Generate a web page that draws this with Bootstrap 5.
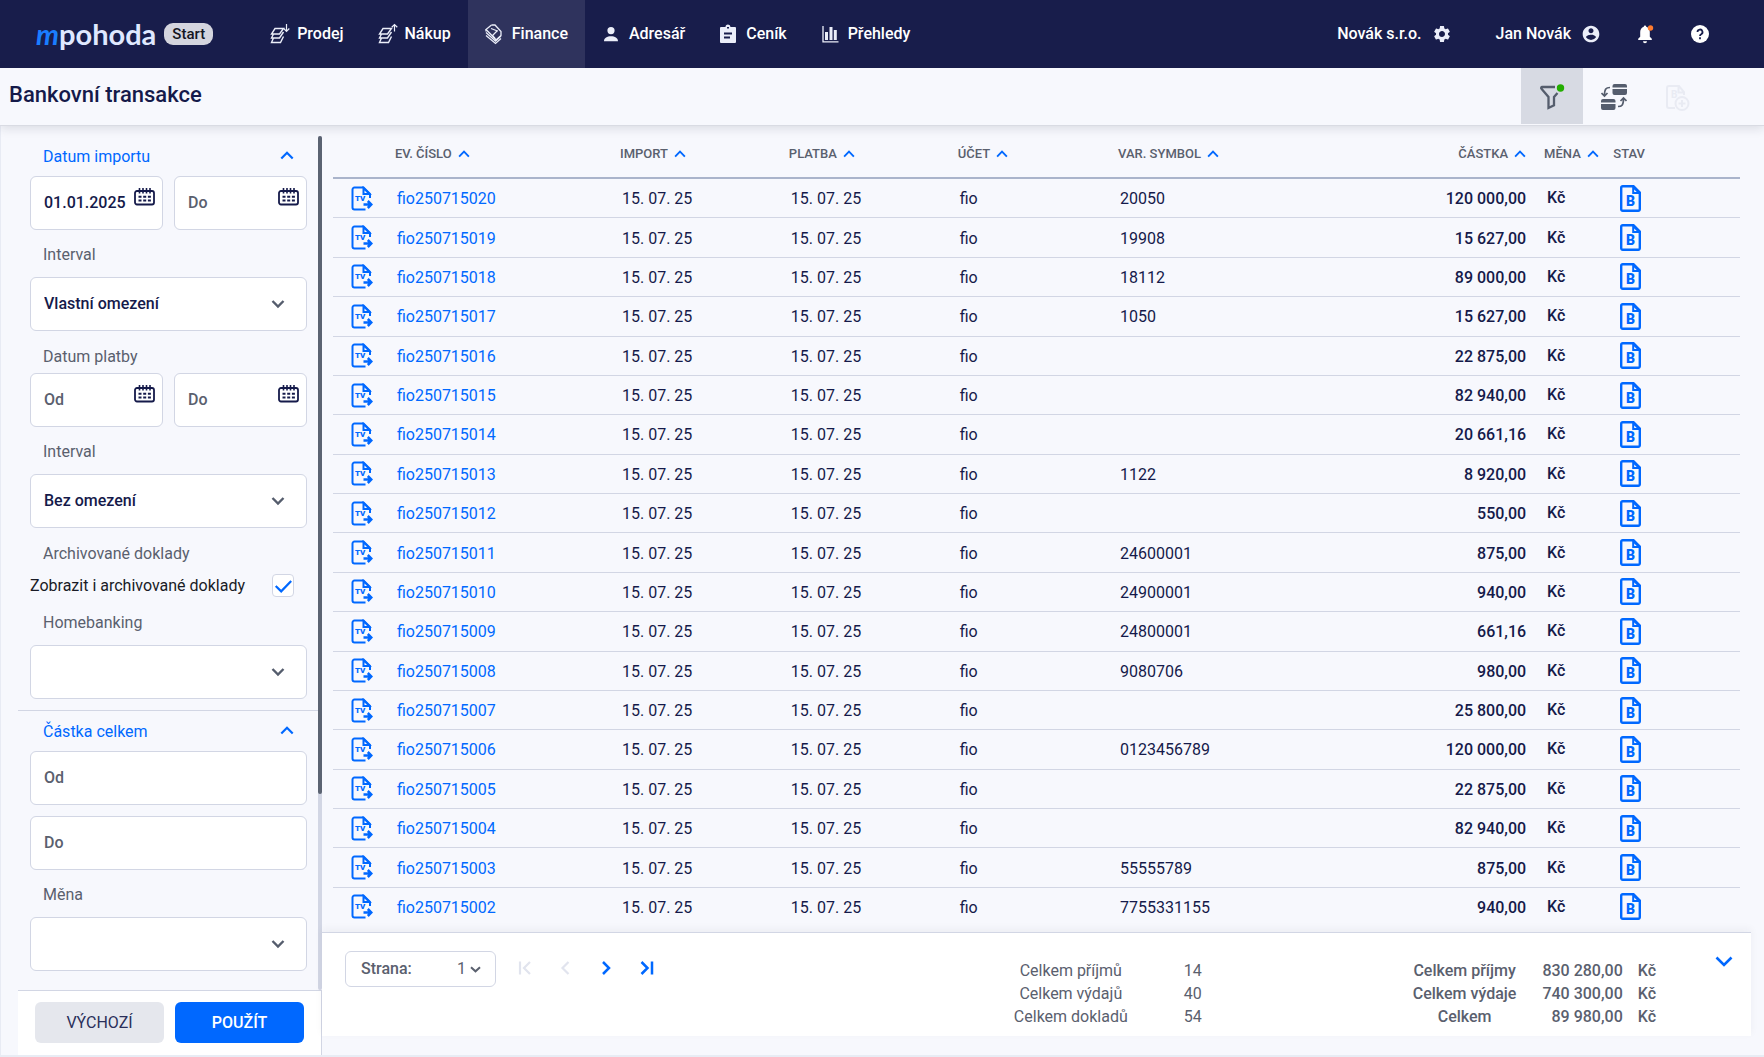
<!DOCTYPE html>
<html lang="cs">
<head>
<meta charset="utf-8">
<meta name="viewport" content="width=device-width, initial-scale=1">
<title>Bankovní transakce</title>
<link href="https://cdn.jsdelivr.net/npm/bootstrap@5.3.0/dist/css/bootstrap.min.css" rel="stylesheet">
<style>
:root{--navy:#181d4b;--blue:#0068ff;--ink:#151a4a;--grey:#5a606e;--line:#d2d6e4;--page:#f7f8fd}
body{font-family:Roboto,"Liberation Sans",sans-serif;font-size:16px;line-height:24px;color:var(--ink);background:var(--page);border-bottom:2px solid #e8ecf4}
main{border-left:1px solid #e8ebf4;padding-top:10px}
svg{display:block;flex:none}
a{text-decoration:none}
.topbar{background:var(--navy);height:68px;padding-left:36px;padding-right:55px}
.brand-name{font:700 29px/36px Lato,sans-serif;color:#dfe8ff}
.brand-name em{color:#1a7dff}
.brand-tag{background:#d4d5de;color:#15161f;border-radius:9px;height:22px;line-height:22px;font-size:15px;font-weight:500;padding:0 8px;margin-left:8px}
.main-nav{margin-left:40px}
.main-nav .nav-link{height:68px;padding:0 17px;gap:8px;color:#fff;font-weight:500}
.main-nav .nav-link svg{width:19px;height:20px;overflow:visible;color:#ebeef9}
.main-nav .nav-link.active{background:#2f335d}
.user-nav a{color:#fff;font-weight:500;gap:10px}
.user-nav .firm{margin-right:44px}
.user-nav .bell{margin:0 36px 0 34px}
.page-head{height:58px;border-bottom:1px solid #d9dbe3;box-shadow:0 2px 10px rgba(30,35,60,.14);z-index:2;padding-left:9px;padding-right:57px}
.page-head h1{font-size:22px;line-height:28px;font-weight:500;margin:0 0 3px}
.tool{width:62px;height:56px;border:0;border-radius:0;background:none;color:#555d6d;padding:0}
.tool.active{background:#d7dae3}
.side{width:304px;margin-left:17px}
.side-scroll{padding:0 11px 0 12px;overflow:hidden}
.track{width:4px;background:var(--line);border-radius:2px}
.thumb{width:4px;height:77%;background:#5b6372;border-radius:2px}
.sect{height:40px;padding:1px 13px 0;background:none;border:0;color:var(--blue);width:100%}
.sect svg{margin-bottom:3px}
.sect-line{border-top:1px solid var(--line);margin:11px -11px 0 -12px}
.cap{display:block;padding:13px 13px 0;color:var(--grey)}
.cap-select{margin-bottom:10px}
.cap-date{padding-top:14px;margin-bottom:4px}
.cap-check{padding-top:14px;margin-bottom:6px}
.field{height:54px;border:1px solid var(--line);border-radius:6px;background-color:#fff;color:var(--ink);font-weight:500;padding:0 13px 2px;font-size:16px}
.field::placeholder{color:var(--grey);opacity:1}
.field + .field{margin-top:11px}
.form-select.field{padding-bottom:0;background-image:url("data:image/svg+xml,%3Csvg xmlns='http://www.w3.org/2000/svg' viewBox='0 0 14 10'%3E%3Cpath d='M1.5 2l5.500 5.500L12.500 2' fill='none' stroke='%23555d6d' stroke-width='2.400'/%3E%3C/svg%3E");background-size:14px 10px;background-position:right 21px center}
.cal{right:8px;top:12px;padding:0;border:0;background:none;color:var(--ink)}
.date-row{gap:11px}
.check-row{height:26px;padding-right:13px;color:#191b26}
.check-row label{padding-top:2px}
.tick{width:22px;height:23px;margin:0;border:1px solid var(--line);border-radius:4px!important}
.form-check-input.tick:checked{background-color:#fff;border-color:var(--line);background-image:url("data:image/svg+xml,%3Csvg xmlns='http://www.w3.org/2000/svg' viewBox='0 0 22 22'%3E%3Cpath d='M3 12l6 6L20 6.500' fill='none' stroke='%230068ff' stroke-width='2.400'/%3E%3C/svg%3E")}
.side-end{border-top:1px solid var(--line);border-right:1px solid var(--line);background:#fff;height:65px;padding:11px 17px;gap:11px}
.side-end .btn{flex:1 1 0;height:41px;border-radius:6px;border:0;padding:0;font-size:16px}
.btn-plain{background:#e5e7ed;color:#2a2f5a}
.btn-main{background:var(--blue);color:#fff;font-weight:500}
.grid-wrap{padding:0 24px 6px 11px}
.docs{table-layout:fixed;border-collapse:separate;border-spacing:0}
.docs th{height:43px;font-size:13px;line-height:20px;font-weight:500;color:var(--grey);border-bottom:2px solid #aab4cb;padding:0 0 5px;white-space:nowrap}
.docs th svg{display:inline-block;margin-left:6px;vertical-align:0}
.docs td{padding:2px 0 0 2px;line-height:24px;border-bottom:1px solid var(--line)}
.docs tbody tr:last-child td{border-bottom:0}
.docs td a{color:var(--blue)}
.docs .sum{text-align:right;font-weight:500}
.docs th.cur{padding-left:18px}
.docs td.cur{padding:0 0 0 21px;font-weight:500}
.docs td.doc{padding:0 0 0 18px}
.docs td.state{padding:0 0 0 7px}
.w-icon{width:4.4%}.w-no{width:16%}.w-date{width:12%}.w-acc{width:11.4%}.w-var{width:16%}.w-sum{width:13%}.w-cur{width:6.2%}
.line-icon{fill:none;stroke:var(--blue);stroke-width:2}
.line-icon .fold-corner{fill:var(--page)}
.line-icon text{fill:var(--blue);stroke:none;font-weight:900}
.foot{height:104px;margin-right:13px;margin-bottom:19px;border-top:1px solid var(--line);background:#fff;box-shadow:0 -3px 8px rgba(30,35,60,.05);padding:18px 18px 0 23px;color:var(--grey)}
.pager-box{width:151px;height:36px;border:1px solid var(--line);border-radius:6px;padding:0 14px 0 15px;font-weight:500}
.pager-box select{appearance:none;border:0;background:none;color:var(--grey);width:14px;padding:0;text-align:right}
.pages{margin-left:21px;gap:27px;height:34px}
.pages button{border:0;background:none;padding:0;color:var(--blue);width:14px}
.pages button:disabled{color:#e1e4ee}
.totals{margin-top:8px}
.totals td{padding:0;line-height:23px;text-align:center}
.totals .num{text-align:right}
.counts{margin-right:211px}
.counts .num{padding-left:56px}
.money{margin-right:59px;font-weight:500}
.money .num{padding-left:26px;padding-right:15px}
.fold{border:0;background:none;padding:5px 0 0;color:var(--blue)}
</style>
<script src="https://cdn.jsdelivr.net/npm/bootstrap@5.3.0/dist/js/bootstrap.bundle.min.js"></script>
</head>
<body class="vh-100 d-flex flex-column overflow-hidden">
<svg width="0" height="0" class="position-absolute" aria-hidden="true">
  <symbol id="up" viewBox="0 0 14 9"><path d="M1.300 7.500L7 1.800l5.700 5.700" fill="none" stroke="#0068ff" stroke-width="2.200"/></symbol>
  <symbol id="cal" viewBox="0 0 21 18"><rect x="1" y="3" width="19" height="13.500" rx="2" fill="none" stroke="currentColor" stroke-width="1.800"/><path d="M5.500 0v5.500M9 0v5.500M12.500 0v5.500M16 0v5.500" stroke="currentColor" stroke-width="1.600"/><path d="M4.500 8.700h12.500M4.500 12.500h12.500" stroke="currentColor" stroke-width="2" stroke-dasharray="3 1.700"/></symbol>
  <symbol id="stack" viewBox="0 0 19 20"><path d="M5 4.500h8.500l-4 5.500H1.500zM3.500 10L1.500 14h8l4-6M3.500 14L1.500 18.500h9l3-6" fill="none" stroke="currentColor" stroke-width="1.400"/></symbol>
</svg>

<header class="topbar d-flex align-items-center flex-shrink-0">
  <a href="#" class="d-flex align-items-center"><span class="brand-name"><em>m</em>pohoda</span><span class="brand-tag">Start</span></a>
  <nav class="main-nav nav flex-nowrap">
    <a class="nav-link d-flex align-items-center" href="#"><svg viewBox="0 0 19 20"><use href="#stack" width="19" height="20"/><path d="M16.500 0v7M13.700 4.500l2.800 2.800 2.800-2.800" fill="none" stroke="currentColor" stroke-width="1.200"/></svg>Prodej</a>
    <a class="nav-link d-flex align-items-center" href="#"><svg viewBox="0 0 19 20"><use href="#stack" width="19" height="20"/><path d="M16.500 7.500v-7M13.700 3.200L16.500.5l2.800 2.700" fill="none" stroke="currentColor" stroke-width="1.200"/></svg>Nákup</a>
    <a class="nav-link active d-flex align-items-center" href="#"><svg viewBox="0 0 19 20"><g fill="none" stroke="currentColor" stroke-width="1.300"><path d="M6.500 1l3.500 0 6 6.500v4l-5 4.500-3.500-4.500 5-5"/><path d="M6.500 1L1 5.500l9 9"/><path d="M1 8.500l9.500 8.500 5.500-5M1 11.500l9.500 8 5.500-5M1 5.500v2M6 4.500l6.500 2.500"/></g></svg>Finance</a>
    <a class="nav-link d-flex align-items-center" href="#"><svg viewBox="0 0 19 20"><path d="M9 3a3.600 3.600 0 1 1 0 7.200A3.600 3.600 0 0 1 9 3zM2 17.300c0-3.200 3.200-5 7-5s7 1.800 7 5z" fill="currentColor"/></svg>Adresář</a>
    <a class="nav-link d-flex align-items-center" href="#"><svg viewBox="0 0 19 20"><path fill="currentColor" fill-rule="evenodd" d="M2 3h4.500a2.500 2.500 0 0 1 5 0H16a1 1 0 0 1 1 1v14a1 1 0 0 1-1 1H2a1 1 0 0 1-1-1V4a1 1 0 0 1 1-1zm6 0v1.500h2V3zM5 8.500v2h8v-2zm0 4v2h6v-2z"/></svg>Ceník</a>
    <a class="nav-link d-flex align-items-center" href="#"><svg viewBox="0 0 19 20"><path d="M2 2v15.800h15.500" fill="none" stroke="currentColor" stroke-width="1.300"/><path d="M4 8h3v8H4zM8.500 3h3v13h-3zM12.800 6h3v10h-3z" fill="currentColor"/></svg>Přehledy</a>
  </nav>
  <div class="user-nav d-flex align-items-center ms-auto">
    <a href="#" class="firm d-flex align-items-center"><span>Novák s.r.o.</span><svg width="20" height="20" viewBox="0 0 24 24" fill="#ebeef9"><path d="M19.140 12.940c.040-.300.060-.610.060-.940s-.020-.640-.070-.940l2.030-1.580a.490.490 0 0 0 .120-.610l-1.920-3.320a.488.488 0 0 0-.590-.220l-2.390.960c-.500-.380-1.030-.700-1.620-.940l-.360-2.540a.484.484 0 0 0-.480-.410h-3.840c-.240 0-.430.170-.470.410l-.360 2.540c-.590.240-1.130.570-1.620.940l-2.390-.960c-.220-.080-.470 0-.590.220L2.740 8.870c-.120.210-.080.470.120.610l2.030 1.580c-.050.300-.090.630-.090.940s.020.640.070.940l-2.030 1.580a.490.490 0 0 0-.120.610l1.920 3.320c.120.220.370.290.590.220l2.390-.960c.500.380 1.030.700 1.620.940l.360 2.540c.050.240.240.410.480.410h3.840c.240 0 .440-.170.470-.410l.360-2.540c.590-.240 1.130-.560 1.620-.940l2.390.960c.220.080.470 0 .590-.220l1.920-3.320c.120-.220.070-.470-.120-.610zM12 15.600A3.610 3.610 0 0 1 8.400 12c0-1.980 1.620-3.600 3.600-3.600s3.600 1.620 3.600 3.600-1.620 3.600-3.600 3.600z"/></svg></a>
    <a href="#" class="d-flex align-items-center"><span>Jan Novák</span><svg width="20" height="20" viewBox="0 0 24 24" fill="#ebeef9"><path d="M12 2C6.480 2 2 6.480 2 12s4.480 10 10 10 10-4.480 10-10S17.520 2 12 2zm0 3c1.660 0 3 1.340 3 3s-1.340 3-3 3-3-1.340-3-3 1.340-3 3-3zm0 14.200a7.200 7.200 0 0 1-6-3.220c.030-1.990 4-3.080 6-3.080 1.990 0 5.970 1.090 6 3.080a7.200 7.200 0 0 1-6 3.220z"/></svg></a>
    <a href="#" class="bell" aria-label="Oznámení"><svg width="20" height="20" viewBox="0 0 20 20" overflow="visible"><path fill="#fff" d="M8 17.300h4a2 2 0 0 1-4 0zM10 1.500c.8 0 1.200.6 1.200 1.300 2.400.6 3.600 2.700 3.600 5.200v4.800l2 2v1.200H3.200v-1.200l2-2V8c0-2.500 1.300-4.600 3.600-5.200 0-.7.400-1.300 1.200-1.300z"/><circle cx="15.500" cy="4" r="2.700" fill="#ff7b2e"/></svg></a>
    <a href="#" aria-label="Nápověda"><svg width="18" height="18" viewBox="0 0 18 18"><circle cx="9" cy="9" r="9" fill="#fff"/><path d="M6.500 7a2.500 2.500 0 1 1 3.700 2.200C9.300 9.700 9 10 9 11M9 12.300v1.900" fill="none" stroke="#181d4b" stroke-width="1.800"/></svg></a>
  </div>
</header>

<div class="page-head d-flex align-items-center position-relative flex-shrink-0">
  <h1>Bankovní transakce</h1>
  <div class="d-flex ms-auto align-self-start">
    <button class="tool active d-flex align-items-center justify-content-center" aria-label="Filtr"><svg width="26" height="28" viewBox="0 0 26 28"><path d="M16 5H3.200c-1 0-1.400 1-.7 1.700L9.500 15v11l5.500-2.700V15l3.500-4" fill="none" stroke="currentColor" stroke-width="2.300"/><circle cx="21.500" cy="6" r="3.700" fill="#23ad00"/></svg></button>
    <button class="tool d-flex align-items-center justify-content-center" aria-label="Převod"><svg width="26" height="28" viewBox="0 -2 26 28"><path d="M11.500 3.500V2a2 2 0 0 1 2-2h10.500a2 2 0 0 1 2 2v1.500zM11.500 5h14.500v4a2 2 0 0 1-2 2h-10.500a2 2 0 0 1-2-2zM0 18.500V17a2 2 0 0 1 2-2h10.500a2 2 0 0 1 2 2v1.500zM0 20h14.500v4a2 2 0 0 1-2 2H2a2 2 0 0 1-2-2z" fill="currentColor"/><path d="M9 3.500C5 3.500 3.500 5 3.500 11.500M.5 9l3 3 3-3M17 22.500c4 0 5.500-1.500 5.500-8M19.500 17l3-3 3 3" fill="none" stroke="currentColor" stroke-width="1.700"/></svg></button>
    <button class="tool d-flex align-items-center justify-content-center" disabled aria-label="Nový doklad"><svg width="24" height="28" viewBox="-2 -3 24 28" overflow="visible" fill="none" stroke="#e9ebf3" stroke-width="2"><path d="M9 23H3a2 2 0 0 1-2-2V3a2 2 0 0 1 2-2h10l5 6v3M12.500 1v6.500H18"/><text x="5" y="13" font-family="Roboto" font-weight="700" font-size="10" fill="#e9ebf3" stroke="none">B</text><circle cx="16" cy="18.500" r="6.500"/><path d="M16 15v7M12.500 18.500h7"/></svg></button>
  </div>
</div>

<main class="d-flex flex-grow-1 overflow-hidden">
  <form class="side d-flex flex-column flex-shrink-0">
    <div class="d-flex flex-grow-1 overflow-hidden">
      <div class="side-scroll flex-grow-1">
        <button type="button" class="sect d-flex align-items-center justify-content-between">Datum importu<svg width="14" height="9"><use href="#up"/></svg></button>
        <div class="date-row d-flex">
          <div class="position-relative"><input class="form-control field" aria-label="Datum importu od" placeholder="Od" value="01.01.2025"><button type="button" class="cal position-absolute" aria-label="Kalendář"><svg width="21" height="18"><use href="#cal"/></svg></button></div>
          <div class="position-relative"><input class="form-control field" aria-label="Datum importu do" placeholder="Do"><button type="button" class="cal position-absolute" aria-label="Kalendář"><svg width="21" height="18"><use href="#cal"/></svg></button></div>
        </div>
        <label class="cap cap-select" for="int1">Interval</label>
        <select class="form-select field" id="int1"><option>Vlastní omezení</option></select>
        <span class="cap cap-date">Datum platby</span>
        <div class="date-row d-flex">
          <div class="position-relative"><input class="form-control field" aria-label="Datum platby od" placeholder="Od"><button type="button" class="cal position-absolute" aria-label="Kalendář"><svg width="21" height="18"><use href="#cal"/></svg></button></div>
          <div class="position-relative"><input class="form-control field" aria-label="Datum platby do" placeholder="Do"><button type="button" class="cal position-absolute" aria-label="Kalendář"><svg width="21" height="18"><use href="#cal"/></svg></button></div>
        </div>
        <label class="cap cap-select" for="int2">Interval</label>
        <select class="form-select field" id="int2"><option>Bez omezení</option></select>
        <span class="cap cap-check">Archivované doklady</span>
        <div class="check-row d-flex align-items-center justify-content-between">
          <label for="arch">Zobrazit i archivované doklady</label>
          <input class="form-check-input tick" type="checkbox" id="arch" checked>
        </div>
        <label class="cap cap-select" for="hb">Homebanking</label>
        <select class="form-select field" id="hb"><option></option></select>
        <div class="sect-line"></div>
        <button type="button" class="sect d-flex align-items-center justify-content-between">Částka celkem<svg width="14" height="9"><use href="#up"/></svg></button>
        <input class="form-control field" aria-label="Částka od" placeholder="Od">
        <input class="form-control field" aria-label="Částka do" placeholder="Do">
        <label class="cap cap-select" for="cur">Měna</label>
        <select class="form-select field" id="cur"><option></option></select>
      </div>
      <div class="track"><div class="thumb"></div></div>
    </div>
    <div class="side-end d-flex">
      <button type="reset" class="btn btn-plain">VÝCHOZÍ</button>
      <button type="submit" class="btn btn-main">POUŽÍT</button>
    </div>
  </form>

  <section class="flex-grow-1 d-flex flex-column">
    <div class="grid-wrap flex-grow-1">
      <table class="docs w-100 h-100">
        <thead><tr>
          <th class="w-icon"></th>
          <th class="w-no">EV. ČÍSLO<svg width="12" height="8"><use href="#up"/></svg></th>
          <th class="w-date">IMPORT<svg width="12" height="8"><use href="#up"/></svg></th>
          <th class="w-date">PLATBA<svg width="12" height="8"><use href="#up"/></svg></th>
          <th class="w-acc">ÚČET<svg width="12" height="8"><use href="#up"/></svg></th>
          <th class="w-var">VAR. SYMBOL<svg width="12" height="8"><use href="#up"/></svg></th>
          <th class="w-sum sum">ČÁSTKA<svg width="12" height="8"><use href="#up"/></svg></th>
          <th class="w-cur cur">MĚNA<svg width="12" height="8"><use href="#up"/></svg></th>
          <th>STAV</th>
        </tr></thead>
        <tbody id="rows"></tbody>
      </table>
    </div>
    <div class="foot d-flex align-items-start flex-shrink-0">
      <div class="pager-box d-flex align-items-center justify-content-between">
        <label for="page">Strana:</label>
        <span class="d-flex align-items-center gap-1"><select id="page"><option>1</option></select><svg width="11" height="7" viewBox="0 0 11 7"><path d="M1 1.300l4.500 4 4.500-4" fill="none" stroke="currentColor" stroke-width="2"/></svg></span>
      </div>
      <div class="pages d-flex align-items-center">
        <button disabled aria-label="První"><svg width="14" height="14" viewBox="0 0 14 14" fill="none" stroke="currentColor" stroke-width="2.200"><path d="M3 .5v13M13 1L7 7l6 6"/></svg></button>
        <button disabled aria-label="Předchozí"><svg width="14" height="14" viewBox="0 0 14 14" fill="none" stroke="currentColor" stroke-width="2.200"><path d="M10.500 1l-6 6 6 6"/></svg></button>
        <button type="button" aria-label="Další"><svg width="14" height="14" viewBox="0 0 14 14" fill="none" stroke="currentColor" stroke-width="2.500"><path d="M4 1l6 6-6 6"/></svg></button>
        <button type="button" aria-label="Poslední"><svg width="14" height="14" viewBox="0 0 14 14" fill="none" stroke="currentColor" stroke-width="2.500"><path d="M1.500 1l6 6-6 6M12 .5v13"/></svg></button>
      </div>
      <table class="totals counts ms-auto">
        <tr><td>Celkem příjmů</td><td class="num">14</td></tr>
        <tr><td>Celkem výdajů</td><td class="num">40</td></tr>
        <tr><td>Celkem dokladů</td><td class="num">54</td></tr>
      </table>
      <table class="totals money">
        <tr><td>Celkem příjmy</td><td class="num">830 280,00</td><td>Kč</td></tr>
        <tr><td>Celkem výdaje</td><td class="num">740 300,00</td><td>Kč</td></tr>
        <tr><td>Celkem</td><td class="num">89 980,00</td><td>Kč</td></tr>
      </table>
      <button type="button" class="fold" aria-label="Sbalit"><svg width="18" height="11" viewBox="0 0 18 11"><path d="M1.500 1.500L9 9l7.500-7.500" fill="none" stroke="currentColor" stroke-width="2.600"/></svg></button>
    </div>
  </section>
</main>
<script>
const docs = [
  ['020','20050','120 000,00'],['019','19908','15 627,00'],['018','18112','89 000,00'],['017','1050','15 627,00'],
  ['016','','22 875,00'],['015','','82 940,00'],['014','','20 661,16'],['013','1122','8 920,00'],['012','','550,00'],
  ['011','24600001','875,00'],['010','24900001','940,00'],['009','24800001','661,16'],['008','9080706','980,00'],
  ['007','','25 800,00'],['006','0123456789','120 000,00'],['005','','22 875,00'],['004','','82 940,00'],
  ['003','55555789','875,00'],['002','7755331155','940,00']
];
const transferIcon = `<svg class="line-icon" width="22" height="25" viewBox="0 0 22 25">
  <path d="M14.500 23.500H3.500a2 2 0 0 1-2-2v-18a2 2 0 0 1 2-2H12.500L19 8v4"/><path class="fold-corner" d="M12.500 2v6h6z"/>
  <text x="4" y="15" font-size="8">TV</text><path d="M12.500 18.500h7M16.800 15l3.500 3.500-3.500 3.500" stroke-width="2.500"/></svg>`;
const bankIcon = `<svg class="line-icon" width="21" height="27" viewBox="0 0 21 27">
  <path stroke-width="2.400" d="M3 1.200h10.500L19.800 7.500v16.800a1.500 1.500 0 0 1-1.500 1.500H2.700a1.500 1.500 0 0 1-1.500-1.500V2.700A1.500 1.500 0 0 1 2.700 1.200z"/>
  <path class="fold-corner" d="M13.200 2v6h6z"/><text x="10.500" y="21" text-anchor="middle" font-size="14">B</text></svg>`;
document.getElementById('rows').innerHTML = docs.map(([no, sym, sum]) => `<tr>
  <td class="doc">${transferIcon}</td>
  <td><a href="#">fio250715${no}</a></td><td>15. 07. 25</td><td>15. 07. 25</td><td>fio</td><td>${sym}</td>
  <td class="sum">${sum}</td><td class="cur">Kč</td>
  <td class="state">${bankIcon}</td></tr>`).join('');
</script>
</body>
</html>
